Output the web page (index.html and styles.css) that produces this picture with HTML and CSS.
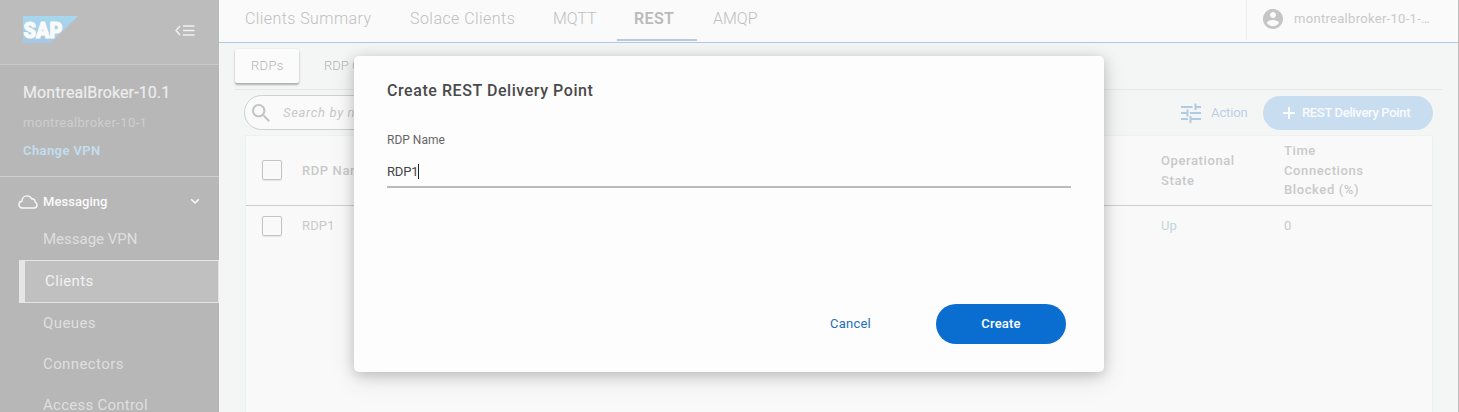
FILE: index.html
```html
<!DOCTYPE html>
<html lang="en">
<head>
<meta charset="utf-8">
<title>REST Delivery Points</title>
<link rel="stylesheet" href="styles.css">
</head>
<body>
<div class="app">
  <aside class="sidebar">
    <div class="brand">
      <svg class="logo" width="56" height="28" viewBox="0 0 56 28">
        <defs><linearGradient id="sap" x1="0" y1="0" x2="0" y2="1"><stop offset="0" stop-color="#a6d8ed"/><stop offset="1" stop-color="#a7c7e4"/></linearGradient></defs>
        <path d="M0 0H55L28 27H0Z" fill="url(#sap)"/>
        <text class="logo-text" x="0.5" y="21.5" textLength="39" lengthAdjust="spacingAndGlyphs">SAP</text>
      </svg>
      <svg class="collapse" width="20" height="12" viewBox="0 0 20 12" fill="none" stroke="#f0f0f0" stroke-width="1.5"><path d="M5 1L1 5.500L5 10M8 1H19.500M8 5.500H19.500M8 10H19.500"/></svg>
    </div>
    <div class="vpn">
      <div class="vpn-name">MontrealBroker-10.1</div>
      <div class="vpn-id">montrealbroker-10-1</div>
      <div class="vpn-change">Change VPN</div>
    </div>
    <nav class="nav">
      <div class="nav-group">
        <svg width="20" height="14" viewBox="0 0 20 14" fill="none" stroke="#fafafa" stroke-width="1.4"><path d="M4.5 13C2.3 13 .9 11.500 .9 9.600C.9 7.700 2.200 6.300 3.900 6.200C4 3 6.400 .9 9 .9C11.200 .9 12.700 2 13.500 3.800C16 3.600 17.300 5.200 17.200 7.200C18.500 7.700 19 8.800 19 10C19 11.700 17.800 13 16.200 13Z"/></svg>
        <span class="nav-title">Messaging</span>
        <svg class="chev" width="10" height="7" viewBox="0 0 10 7" fill="none" stroke="#fafafa" stroke-width="1.6"><path d="M1.200 1.300L5 5L8.800 1.300"/></svg>
      </div>
      <div class="nav-item n1">Message VPN</div>
      <div class="nav-item active">Clients</div>
      <div class="nav-item n2">Queues</div>
      <div class="nav-item n3">Connectors</div>
      <div class="nav-item n4">Access Control</div>
    </nav>
  </aside>
  <main class="main">
    <header class="topbar">
      <div class="tab t1">Clients Summary</div>
      <div class="tab t2">Solace Clients</div>
      <div class="tab t3">MQTT</div>
      <div class="tab on">REST</div>
      <div class="tab t5">AMQP</div>
      <div class="user">
        <svg width="20" height="20" viewBox="2 2 20 20"><path fill="#c5c5c5" d="M12 2C6.480 2 2 6.480 2 12s4.480 10 10 10 10-4.480 10-10S17.520 2 12 2zm0 3c1.660 0 3 1.340 3 3s-1.340 3-3 3-3-1.340-3-3 1.340-3 3-3zm0 14.200c-2.500 0-4.710-1.280-6-3.220.030-1.990 4-3.080 6-3.080 1.990 0 5.970 1.090 6 3.080-1.290 1.940-3.500 3.220-6 3.220z"/></svg>
        <span>montrealbroker-10-1-…</span>
      </div>
    </header>
    <div class="subtabs">
      <div class="subtab sel">RDPs</div>
      <div class="subtab next">RDP Clients</div>
    </div>
    <div class="toolbar">
      <div class="search">
        <svg width="18" height="18" viewBox="3 3 17.500 17.500"><path fill="#c4c4c4" d="M15.500 14h-.79l-.28-.27C15.410 12.590 16 11.110 16 9.500 16 5.910 13.090 3 9.500 3S3 5.910 3 9.500 5.910 16 9.500 16c1.610 0 3.090-.59 4.230-1.570l.27.28v.79l5 4.990L20.490 19l-4.990-5zm-6 0C7.010 14 5 11.990 5 9.500S7.010 5 9.500 5 14 7.010 14 9.500 11.990 14 9.500 14z"/></svg>
        <span>Search by name</span>
      </div>
      <div class="action">
        <svg width="20" height="20" viewBox="0 0 20 20" fill="none" stroke="#b1cae4" stroke-width="2"><path d="M0 4H11.500M14 4H20M14.500 .5V7M0 10H6M6.500 6.500V13.500M9 10H20M0 16H7M9.500 13V20M9.500 16H20"/></svg>
        <span>Action</span>
      </div>
      <div class="add">
        <svg width="12" height="12" viewBox="0 0 12 12" stroke="#f9fbfd" stroke-width="2"><path d="M6 0V12M0 6H12"/></svg>
        <span>REST Delivery Point</span>
      </div>
    </div>
    <div class="table">
      <div class="row head">
        <i class="box"></i><div class="c1">RDP Name</div><div class="c2">Operational<br>State</div><div class="c3">Time<br>Connections<br>Blocked (%)</div>
      </div>
      <div class="row">
        <i class="box"></i><div class="c1">RDP1</div><div class="c2 up">Up</div><div class="c3">0</div>
      </div>
    </div>
  </main>
</div>
<div class="modal">
  <div class="modal-title">Create REST Delivery Point</div>
  <div class="label">RDP Name</div>
  <div class="field"><span>RDP1</span><i class="caret"></i></div>
  <div class="buttons">
    <div class="cancel">Cancel</div>
    <div class="create">Create</div>
  </div>
</div>
</body>
</html>
```
FILE: styles.css
```css
* { box-sizing: border-box; }
body { margin: 0; height: 412px; overflow: hidden; font-family: Roboto, "Liberation Sans", sans-serif; font-size: 13px; color: #c9c9c9; }
svg { display: block; flex: none; }
.app { display: flex; height: 412px; background: #f4f6f6; border-right: 1px solid #bdbdbd; }
.sidebar { width: 219px; flex: none; background: #b7b7b7; }
.brand { height: 65px; padding: 16px 24px 0 23px; display: flex; justify-content: space-between; background: #bcbcbc; border-bottom: 1px solid #c9c9c9; }
.logo-text { font: 900 22px Roboto, sans-serif; fill: #fafafa; stroke: #fafafa; stroke-width: 1.1; }
.collapse { margin: 9px 0 0; }
.vpn { height: 112px; padding: 17px 23px 0; border-bottom: 1px solid #cfcfcf; white-space: nowrap; }
.vpn-name { font-size: 16px; line-height: 22px; color: #ededed; letter-spacing: .1px; -webkit-text-stroke: .2px #ededed; }
.vpn-id { font-size: 13px; line-height: 18px; margin-top: 10px; color: #cecece; letter-spacing: .35px; }
.vpn-change { font-size: 13px; font-weight: 600; line-height: 18px; margin-top: 10px; color: #c3def0; letter-spacing: .4px; }
.nav-group { display: flex; align-items: center; height: 49px; padding-left: 18px; color: #fafafa; }
.nav-title { margin-left: 5px; font-weight: 500; width: 147px; letter-spacing: .05px; }
.nav-item { height: 41px; line-height: 41px; padding-left: 43px; font-size: 15px; color: #dfdfdf; letter-spacing: .25px; }
.n1 { height: 34px; line-height: 26px; letter-spacing: 0; }
.n2, .n3 { letter-spacing: .4px; }
.active { height: 43px; margin-left: 19px; padding-left: 20px; border: 1px solid #e6e6e6; border-left-width: 6px; background: #c0c0c0; color: #f2f2f2; line-height: 40px; letter-spacing: .4px; }
.main { flex: 1; min-width: 0; }
.topbar { height: 43px; display: flex; padding-left: 10px; border-bottom: 1px solid #b3c8de; background: #fafafa; }
.tab { width: 80px; height: 41px; line-height: 37px; padding-left: 16px; font-size: 16px; font-weight: 300; color: #bfbfbf; white-space: nowrap; }
.t1 { width: 165px; letter-spacing: .42px; }
.t2 { width: 143px; letter-spacing: .45px; }
.on { padding-left: 17px; font-weight: 600; letter-spacing: .35px; color: #bababa; border-bottom: 2px solid #b3cae0; }
.user { margin-left: auto; width: 212px; height: 40px; display: flex; align-items: center; padding: 0 0 3px 16px; gap: 11px; border-left: 1px solid #eeeeee; white-space: nowrap; letter-spacing: .3px; }
.subtabs { display: flex; gap: 9px; height: 47px; margin: 0 16px; padding-top: 6px; border-bottom: 1px solid #e6e8e8; }
.subtab { height: 34px; line-height: 34px; padding: 0 16px; color: #b4b4b4; font-weight: 300; letter-spacing: .3px; white-space: nowrap; }
.next { letter-spacing: 0; }
.sel { width: 64px; background: #fbfbfb; border-radius: 2px; box-shadow: 0 2px 2px #b0b0b0, 0 0 2px #ddd; }
.toolbar { display: flex; align-items: center; height: 45px; padding: 0 25px; }
.search { display: flex; align-items: center; gap: 13px; width: 400px; height: 35px; padding-left: 7px; border: 1px solid #cfcfcf; border-radius: 18px; background: #fafafa; font-style: italic; letter-spacing: .65px; }
.action { display: flex; align-items: center; gap: 10px; margin-left: auto; width: 82px; color: #bccfe4; letter-spacing: -.1px; }
.add { width: 170px; height: 34px; border-radius: 17px; background: #c9ddf0; color: #f9fbfd; font-weight: 500; display: flex; align-items: center; gap: 7px; padding-left: 20px; white-space: nowrap; letter-spacing: -.33px; }
.table { height: 277px; margin: 0 25px 0 26px; background: #f9f9f9; border: 1px solid #eff1f1; border-bottom: 0; }
.row { display: flex; align-items: center; height: 39px; padding-left: 16px; line-height: 19.500px; letter-spacing: .15px; }
.head { height: 70px; border-bottom: 1px solid #cfcfcf; font-weight: 500; letter-spacing: .6px; }
.box { position: relative; top: -1px; width: 20px; height: 20px; border: 1px solid #c4c4c4; border-radius: 2px; box-shadow: 0 1px 1px #e3e3e3; }
.row:not(.head) .box { top: 0; }
.c1 { margin-left: 20px; width: 859px; }
.c2 { width: 123px; }
.up { color: #bfd6d6; }
.modal { position: absolute; left: 354px; top: 56px; width: 750px; height: 316px; padding: 23px 33px 0; background: #fdfdfd; border-radius: 5px; box-shadow: 0 3px 14px rgba(0,0,0,.22), 0 8px 30px rgba(0,0,0,.08); color: #555; }
.modal-title { font-size: 16px; font-weight: 500; line-height: 24px; color: #4a4a4a; letter-spacing: .56px; }
.label { margin-top: 27px; font-size: 12px; line-height: 20px; color: #666; }
.field { display: flex; align-items: center; height: 38px; padding-top: 6px; border-bottom: 2px solid #bbb; color: #444; letter-spacing: -.15px; }
.caret { width: 1px; height: 15px; background: #222; }
.buttons { display: flex; justify-content: flex-end; align-items: center; gap: 65px; margin-top: 116px; padding-right: 5px; }
.cancel { color: #1f6fb8; letter-spacing: .25px; line-height: 17px; padding-bottom: 2px; }
.create { width: 130px; height: 40px; line-height: 39px; border-radius: 20px; background: #0a6ed1; color: #fff; font-weight: 500; letter-spacing: .2px; text-align: center; }
```
